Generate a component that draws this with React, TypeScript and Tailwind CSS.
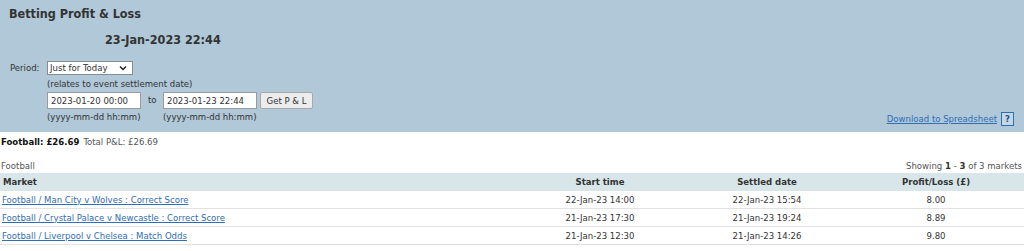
import React from "react";

const font = { fontFamily: "'DejaVu Sans Condensed', 'DejaVu Sans', sans-serif", fontStretch: "condensed" } as React.CSSProperties;

const rows = [
  { m: "Football / Man City v Wolves : Correct Score", s: "22-Jan-23 14:00", d: "22-Jan-23 15:54", p: "8.00" },
  { m: "Football / Crystal Palace v Newcastle : Correct Score", s: "21-Jan-23 17:30", d: "21-Jan-23 19:24", p: "8.89" },
  { m: "Football / Liverpool v Chelsea : Match Odds", s: "21-Jan-23 12:30", d: "21-Jan-23 14:26", p: "9.80" },
];

export default function App() {
  return (
    <div className="w-[1024px] h-[251px] bg-white text-[#333] text-[9.5px] leading-[12px] overflow-hidden whitespace-nowrap" style={font}>
      <div className="bg-[#b0c8d8] h-[132px] flex flex-col">
        <div className="pl-[9px] pt-[6px] text-[12.5px] leading-[16px] font-bold">Betting Profit &amp; Loss</div>
        <div className="pl-[105px] pt-[10px] text-[12.5px] leading-[16px] font-bold">23-Jan-2023 22:44</div>
        <div className="flex justify-between items-end pr-[10px]">
          <div className="flex flex-col pt-[13px]">
            <div className="flex items-center h-[14px]">
              <span className="w-[47px] shrink-0 pl-[10px]">Period:</span>
              <div className="w-[86px] h-[14px] shrink-0 bg-white border border-[#8a8a8a] flex items-center justify-between pl-[2px] pr-[5px]">
                <span>Just for Today</span>
                <svg width="8" height="6" viewBox="0 0 8 6"><path d="M1 1.5 L4 4.5 L7 1.5" fill="none" stroke="#222" strokeWidth="1.5" /></svg>
              </div>
            </div>
            <div className="pl-[47px] pt-[2px] h-[16px] leading-[14px]">(relates to event settlement date)</div>
            <div className="flex items-start pl-[47px] pt-[1px]">
              <div className="flex flex-col w-[94px] shrink-0">
                <div className="w-[94px] h-[17px] bg-white border border-[#9a9a9a] flex items-center pl-[3px]">2023-01-20 00:00</div>
                <div className="pt-[2px]">(yyyy-mm-dd hh:mm)</div>
              </div>
              <div className="w-[22px] shrink-0 pl-[7px] pt-[2px]">to</div>
              <div className="flex flex-col w-[94px] shrink-0">
                <div className="w-[94px] h-[17px] bg-white border border-[#9a9a9a] flex items-center pl-[3px]">2023-01-23 22:44</div>
                <div className="pt-[2px]">(yyyy-mm-dd hh:mm)</div>
              </div>
              <div className="ml-[3px] w-[53px] h-[17px] shrink-0 bg-[#ececec] border border-[#a8a8a8] rounded-[2px] flex items-center justify-center">Get P &amp; L</div>
            </div>
          </div>
          <div className="flex items-center gap-[4px] mb-[-3px]">
            <a className="text-[#2f6db5] underline">Download to Spreadsheet</a>
            <span className="w-[13px] h-[14px] border border-[#2f6db5] text-[#1f4f8a] font-bold flex items-center justify-center bg-[#c4d7e4]">?</span>
          </div>
        </div>
      </div>
      <div className="pl-[1px] pt-[4px] h-[20px]">
        <span className="font-bold text-[#111]">Football: £26.69</span>
        <span className="ml-[4px] text-[#555]">Total P&amp;L: £26.69</span>
      </div>
      <div className="flex justify-between pl-[1px] pr-[2px] pt-[8px] h-[21px] text-[#555]">
        <span>Football</span>
        <span>Showing <b className="text-[#333]">1</b> - <b className="text-[#333]">3</b> of 3 markets</span>
      </div>
      <div className="grid grid-cols-[1fr_172px_162px_176px] bg-[#d8e6ea] h-[18px] items-center font-bold">
        <div className="pl-[3px]">Market</div>
        <div className="text-center">Start time</div>
        <div className="text-center">Settled date</div>
        <div className="text-center">Profit/Loss (£)</div>
      </div>
      {rows.map((r) => (
        <div key={r.m} className="grid grid-cols-[1fr_172px_162px_176px] h-[18px] items-center border-b border-[#e2e2e2]">
          <div className="pl-[2px]"><a className="text-[#2f6db5] underline">{r.m}</a></div>
          <div className="text-center">{r.s}</div>
          <div className="text-center">{r.d}</div>
          <div className="text-center">{r.p}</div>
        </div>
      ))}
    </div>
  );
}
